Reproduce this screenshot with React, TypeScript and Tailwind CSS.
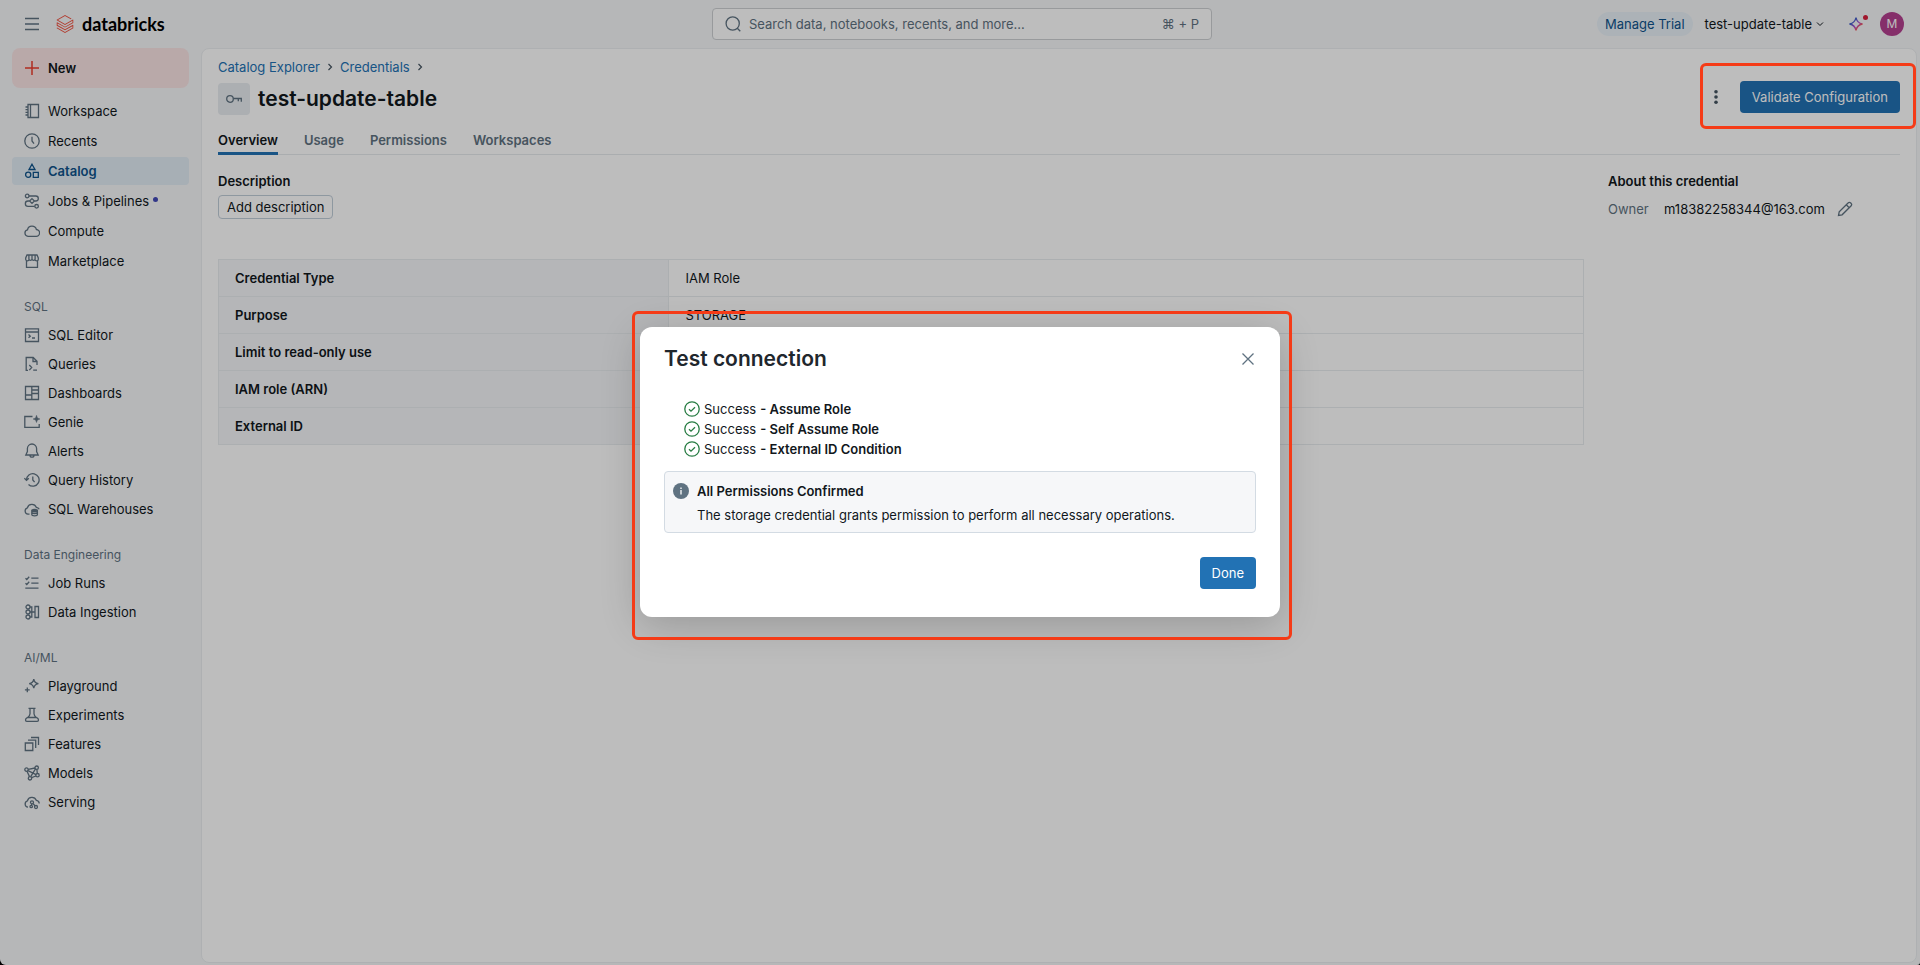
import React from 'react';
import type { ReactNode } from 'react';

const NAV_MAIN = [
  { label: 'Workspace', icon: 'workspace' },
  { label: 'Recents', icon: 'recents' },
  { label: 'Catalog', icon: 'catalog', active: true },
  { label: 'Jobs & Pipelines', icon: 'jobs', dot: true },
  { label: 'Compute', icon: 'compute' },
  { label: 'Marketplace', icon: 'marketplace' },
];

const NAV_SECTIONS = [
  {
    title: 'SQL',
    items: [
      { label: 'SQL Editor', icon: 'editor' },
      { label: 'Queries', icon: 'queries' },
      { label: 'Dashboards', icon: 'dashboards' },
      { label: 'Genie', icon: 'genie' },
      { label: 'Alerts', icon: 'alerts' },
      { label: 'Query History', icon: 'history' },
      { label: 'SQL Warehouses', icon: 'warehouses' },
    ],
  },
  {
    title: 'Data Engineering',
    items: [
      { label: 'Job Runs', icon: 'runs' },
      { label: 'Data Ingestion', icon: 'ingestion' },
    ],
  },
  {
    title: 'AI/ML',
    items: [
      { label: 'Playground', icon: 'playground' },
      { label: 'Experiments', icon: 'experiments' },
      { label: 'Features', icon: 'features' },
      { label: 'Models', icon: 'models' },
      { label: 'Serving', icon: 'serving' },
    ],
  },
];

const TABS = ['Overview', 'Usage', 'Permissions', 'Workspaces'];

const DETAILS = [
  { name: 'Credential Type', value: 'IAM Role' },
  { name: 'Purpose', value: 'STORAGE' },
  { name: 'Limit to read-only use', value: '' },
  { name: 'IAM role (ARN)', value: '' },
  { name: 'External ID', value: '' },
];

const CHECKS = ['Assume Role', 'Self Assume Role', 'External ID Condition'];

const ICONS: Record<string, ReactNode> = {
  workspace: <path d="M4 1.5h10.500v13H4zM6.500 1.500v13M1.500 4H4M1.500 6.700H4M1.500 9.300H4M1.500 12H4" />,
  recents: (
    <>
      <circle cx="8" cy="8" r="7.2" />
      <path d="M8 3.800V8l2 2.600" />
    </>
  ),
  catalog: (
    <>
      <path d="M8 1.200 11 6.500H5zM9.300 9.300h5v5h-5z" />
      <circle cx="4.2" cy="11.8" r="2.6" />
    </>
  ),
  jobs: (
    <>
      <circle cx="3.2" cy="3" r="1.8" />
      <circle cx="12.6" cy="13.3" r="1.8" />
      <path d="M5 3h6.800a2.400 2.400 0 0 1 0 5h-1.400M5.600 8H4a2.600 2.600 0 0 0 0 5.300h6.700M8 5.600 10.400 8 8 10.400 5.600 8z" />
    </>
  ),
  compute: <path d="M4 13.300a3.300 3.300 0 0 1-.5-6.500 4.600 4.600 0 0 1 8.900-.3A3.400 3.400 0 0 1 12 13.300z" />,
  marketplace: (
    <path d="M2.500 8v6.300h11V8M3 2h10l1.300 3v1.200a1.600 1.600 0 0 1-3.200 0 1.600 1.600 0 0 1-3.100 0 1.600 1.600 0 0 1-3.100 0 1.600 1.600 0 0 1-3.200 0V5zM4.900 6V2M8 6V2M11.100 6V2" />
  ),
  editor: <path d="M1.500 1.800h13v12.700h-13zM1.500 5h13M4.500 7.500l1.800 1.700-1.800 1.600M8 11h3" />,
  queries: <path d="M4 14.300H2.200V1.500h7L13 5.300V9M9 1.700v3.800h4M5.300 9l2.400 2.500-2.400 2.600M9.200 14.200H13" />,
  dashboards: <path d="M1.500 1.500h13v13h-13zM7.800 1.500v13M7.800 8.500h6.700M1.500 10h6.300M7.800 5h6.700" />,
  genie: (
    <>
      <path d="M8.500 2.500H.8v10.800h14.400V10" />
      <path d="m12.500 1.200 1 2.800 2.500 1-2.500 1-1 2.600-1-2.600-2.500-1 2.500-1z" fill="currentColor" strokeWidth="0.4" />
    </>
  ),
  alerts: <path d="M8 1a4.600 4.600 0 0 0-4.600 4.600v2.900L1.800 12h12.400l-1.600-3.500V5.600A4.600 4.600 0 0 0 8 1zM6 12.200a2 2 0 0 0 4 0" />,
  history: <path d="M2.500 8a6.300 6.300 0 1 1 2 4.500M.4 6.200l2.100 2.200 2.300-2.200M8.800 4.500V8l1.800 2.200" />,
  warehouses: (
    <>
      <path d="M5.500 13.200H4a3.300 3.300 0 0 1-.6-6.400 4.700 4.700 0 0 1 8.900-.5c1.400.2 2.400.9 2.900 2" />
      <path d="M7.800 9.600h5.600v4a2.800 1.200 0 0 1-5.600 0zM7.800 9.600a2.800 1.200 0 0 1 5.600 0 2.800 1.200 0 0 1-5.600 0M7.800 11.800c1.300 1 4.300 1 5.600 0" />
    </>
  ),
  runs: <path d="M1.500 3.200 2.800 4.500l2.400-2.700M1.500 8.200l1.300 1.300 2.400-2.700M7.300 3.200h7.200M7.300 8.200h7.200M1.300 13.200h13.200" />,
  ingestion: (
    <>
      <circle cx="4" cy="3" r="2" />
      <circle cx="4" cy="8" r="2" />
      <circle cx="4" cy="13" r="2" />
      <path d="M6 3h1.800v10H6M6 8h4.500M11 2.500h3.500v11H11z" />
    </>
  ),
  playground: (
    <path d="M9.800 1.200c.4 2.800 1.600 4 4.600 4.500-3 .5-4.200 1.700-4.600 4.500-.5-2.800-1.700-4-4.600-4.500 2.900-.5 4.100-1.700 4.600-4.500zM3.300 9.500v4.800M.9 11.900h4.800" />
  ),
  experiments: (
    <path d="M4.500 1.300h7M6 1.500v5.300c0 2-1 3-2.700 3.900-1.200.6-1.800 1.200-1.800 2.300 0 .8.500 1.300 1.300 1.300h10.400c.8 0 1.300-.5 1.300-1.300 0-1.100-.6-1.700-1.800-2.300C11 9.800 10 8.800 10 6.800V1.500M3.500 10.500h9" />
  ),
  features: <path d="M1.300 7h7.500v7.500H1.300zM4 4.200h7.700V12M7 1.500h7.500V9" />,
  models: (
    <>
      <circle cx="2.5" cy="4.6" r="1.7" />
      <circle cx="12.7" cy="2.7" r="1.7" />
      <circle cx="13.5" cy="10.2" r="1.7" />
      <circle cx="6" cy="13.3" r="1.7" />
      <path d="m4.200 4.300 6.800-1.300M4 5.600l8 4M3 6.300l2.500 5.300M12.900 4.400l.4 4.100M7.600 12.700l4.300-1.700M11.500 3.900 6.700 11.700" />
    </>
  ),
  serving: (
    <>
      <path d="M4 13.200a3.300 3.300 0 0 1-.6-6.400 4.700 4.700 0 0 1 8.900-.5c1.600.2 2.900 1.300 2.900 3.200" />
      <circle cx="8" cy="8.3" r="1.5" />
      <circle cx="7.2" cy="12.5" r="1.2" />
      <circle cx="12" cy="13" r="1.5" />
      <path d="m9 9.500 2 2.400M7.800 9.800l-.4 1.500" />
    </>
  ),
};

function NavIcon({ name, className = '' }: { name: string; className?: string }) {
  return (
    <svg
      viewBox="0 0 16 16"
      width={16}
      height={16}
      fill="none"
      stroke="currentColor"
      strokeWidth="1.3"
      className={`shrink-0 ${className}`}
      aria-hidden="true"
    >
      {ICONS[name]}
    </svg>
  );
}

function Logo() {
  return (
    <a href="#" className="flex items-center gap-2 text-black">
      <svg viewBox="0 0 24 24" width={18} height={18} fill="#f0503f" aria-hidden="true">
        <path d="M.95 14.184L12 20.403l9.919-5.550v2.210L12 22.662l-10.484-5.960-.565.308v.770L12 24l11.050-6.218v-4.317l-.515-.309L12 19.118l-9.867-5.653v-2.210L12 16.805l11.050-6.218V6.320l-.515-.308L12 11.974 2.647 6.681 12 1.388l7.760 4.368.668-.411v-.566L12 0 .95 6.270v.720L12 13.207l9.919-5.550v2.260L12 15.520 1.516 9.560l-.565.308Z" />
      </svg>
      <span className="font-['Lato','Inter',sans-serif] text-[18px] leading-6 font-bold">databricks</span>
    </a>
  );
}

function TopBar() {
  return (
    <header className="flex h-12 shrink-0 items-center pr-4 pl-5">
      <div className="flex flex-1 items-center gap-3">
        <button type="button" aria-label="Menu" className="p-1 text-[#5f7281]">
          <svg viewBox="0 0 16 16" width={16} height={16} stroke="currentColor" strokeWidth="1.5" aria-hidden="true">
            <path d="M1 2.500h14M1 8h14M1 13.500h14" />
          </svg>
        </button>
        <Logo />
      </div>
      <label className="flex h-8 w-[500px] items-center gap-2 rounded border border-[#cdd0d3] bg-white px-3 text-[#5f7281]">
        <svg viewBox="0 0 16 16" width={16} height={16} fill="none" stroke="currentColor" strokeWidth="1.3" aria-hidden="true">
          <circle cx="7.7" cy="7.5" r="6.6" />
          <path d="m12.300 12.300 3 3" />
        </svg>
        <input
          type="text"
          aria-label="Search"
          placeholder="Search data, notebooks, recents, and more..."
          className="min-w-0 flex-1 bg-transparent outline-none placeholder:text-[#5f7281]"
        />
        <span>⌘ + P</span>
      </label>
      <div className="flex flex-1 items-center justify-end">
        <button type="button" className="h-6 rounded-full bg-[#e8f1f7] px-2 text-[#0e538b]">
          Manage Trial
        </button>
        <button type="button" className="ml-3 flex items-center gap-1 text-[#11171c]">
          test-update-table
          <svg viewBox="0 0 8 8" width={8} height={8} fill="none" stroke="currentColor" aria-hidden="true">
            <path d="m1 2.500 3 3 3-3" />
          </svg>
        </button>
        <button type="button" aria-label="Assistant" className="relative ml-6">
          <svg viewBox="0 0 16 16" width={16} height={16} fill="none" stroke="url(#spark)" strokeWidth="1.4" aria-hidden="true">
            <defs>
              <linearGradient id="spark" x1="0" y1="0" x2="1" y2="1">
                <stop offset="0.300" stopColor="#4462c9" />
                <stop offset="0.550" stopColor="#b04bd0" />
                <stop offset="0.800" stopColor="#ff5f46" />
              </linearGradient>
            </defs>
            <path d="M8 1.500c.7 3.900 2.600 5.800 6.500 6.500-3.900.7-5.800 2.600-6.500 6.500C7.300 10.600 5.400 8.700 1.500 8 5.400 7.300 7.300 5.400 8 1.500z" />
          </svg>
          <span className="absolute -top-px -right-1 size-[5px] rounded-full bg-[#d81f3c]" />
        </button>
        <span className="ml-4 flex size-6 items-center justify-center rounded-full bg-[#b4408f] text-xs text-white">M</span>
      </div>
    </header>
  );
}

type NavItemProps = { label: string; icon: string; active?: boolean; dot?: boolean };

function NavItem({ label, icon, active, dot }: NavItemProps) {
  return (
    <a
      href="#"
      className={`flex h-7 items-center gap-2 rounded px-3 ${
        active ? 'bg-[#e2ecf4] font-semibold text-[#0e538b]' : 'text-[#11171c]'
      }`}
    >
      <NavIcon name={icon} className={active ? '' : 'text-[#5f7281]'} />
      <span>{label}</span>
      {dot && <span className="-mt-1 -ml-1 size-[5px] rounded-full bg-[#434ab8]" />}
    </a>
  );
}

function Sidebar() {
  return (
    <nav className="w-[201px] shrink-0 px-3">
      <button
        type="button"
        className="mb-[9px] flex h-10 w-full items-center gap-2 rounded-lg bg-[#fae5e5] px-3 font-semibold text-[#11171c]"
      >
        <svg viewBox="0 0 16 16" width={16} height={16} stroke="#ee3d2c" strokeWidth="1.5" aria-hidden="true">
          <path d="M8 1v14M1 8h14" />
        </svg>
        New
      </button>
      <div className="flex flex-col gap-[2px]">
        {NAV_MAIN.map((item) => (
          <NavItem key={item.label} {...item} />
        ))}
      </div>
      {NAV_SECTIONS.map((section) => (
        <div key={section.title} className="mt-6">
          <h2 className="mb-[6px] px-3 text-xs leading-4 text-[#5f7281]">{section.title}</h2>
          <div className="flex flex-col gap-px">
            {section.items.map((item) => (
              <NavItem key={item.label} {...item} />
            ))}
          </div>
        </div>
      ))}
    </nav>
  );
}

function Chevron() {
  return (
    <svg viewBox="0 0 8 8" width={8} height={8} fill="none" stroke="#44535f" strokeWidth="1.2" className="mx-[6px]" aria-hidden="true">
      <path d="m2.500 1 3 3-3 3" />
    </svg>
  );
}

function Crumbs() {
  return (
    <div className="flex h-5 items-center text-[#2272b4]">
      <a href="#">Catalog Explorer</a>
      <Chevron />
      <a href="#">Credentials</a>
      <Chevron />
    </div>
  );
}

function CredentialPage() {
  return (
    <main className="mr-[3px] mb-[2px] min-w-0 flex-1 rounded-lg border border-[#ebeef0] bg-white px-4 pt-2">
      <div className="flex items-end justify-between">
        <div>
          <Crumbs />
          <div className="mt-[6px] flex items-center gap-2">
            <span className="flex size-8 items-center justify-center rounded bg-[#e8ecf0] text-[#5f7281]">
              <svg viewBox="0 0 16 16" width={16} height={16} fill="none" stroke="currentColor" strokeWidth="1.3" aria-hidden="true">
                <circle cx="4" cy="8" r="3.3" />
                <path d="M7.300 7.500h8v3.200M12.300 7.500v2.700" />
              </svg>
            </span>
            <h1 className="text-[21px] leading-7 font-semibold">test-update-table</h1>
          </div>
        </div>
        <div className="relative mb-[2px] flex items-center">
          <button type="button" aria-label="More actions" className="flex size-8 items-center justify-center text-[#445461]">
            <svg viewBox="0 0 16 16" width={16} height={16} fill="currentColor" aria-hidden="true">
              <circle cx="8" cy="2.7" r="1.8" />
              <circle cx="8" cy="8" r="1.8" />
              <circle cx="8" cy="13.3" r="1.8" />
            </svg>
          </button>
          <button type="button" className="ml-2 h-8 rounded bg-[#2272b4] px-3 text-white">
            Validate Configuration
          </button>
          <div className="pointer-events-none absolute -top-[18px] -right-4 -bottom-4 left-0 z-20 rounded-md border-3 border-[#f53b17]" />
        </div>
      </div>

      <div role="tablist" className="mt-3 flex gap-[26px] border-b border-[#e6eaed]">
        {TABS.map((tab, index) => (
          <button
            key={tab}
            type="button"
            role="tab"
            aria-selected={index === 0}
            className={`-mb-px h-7 border-b-3 font-semibold ${
              index === 0 ? 'border-[#2272b4] text-[#11171c]' : 'border-transparent text-[#5f7281]'
            }`}
          >
            {tab}
          </button>
        ))}
      </div>

      <div className="flex gap-6 pt-4">
        <section className="min-w-0 flex-1">
          <h2 className="font-semibold">Description</h2>
          <button type="button" className="mt-1 h-6 rounded border border-[#c0cdd8] px-2">
            Add description
          </button>
          <table className="mt-10 w-full table-fixed border-collapse border border-[#e8ecef] text-left">
            <tbody>
              {DETAILS.map((row) => (
                <tr key={row.name} className="h-[37px] border-b border-[#e8ecef]">
                  <th scope="row" className="w-[33%] border-r border-[#e8ecef] bg-[#f4f6f8] px-4 font-semibold">
                    {row.name}
                  </th>
                  <td className="px-4">{row.value}</td>
                </tr>
              ))}
            </tbody>
          </table>
        </section>
        <aside className="w-[292px] shrink-0">
          <h2 className="font-semibold">About this credential</h2>
          <div className="mt-2 flex items-center">
            <span className="w-14 text-[#5f7281]">Owner</span>
            <span>m18382258344@163.com</span>
            <button type="button" aria-label="Edit owner" className="ml-3 text-[#5f7281]">
              <svg viewBox="0 0 16 16" width={16} height={16} fill="none" stroke="currentColor" strokeWidth="1.3" aria-hidden="true">
                <path d="m1.500 14.500.7-3.600L11.300 1.800a1.500 1.500 0 0 1 2.200 0l.7.700a1.500 1.500 0 0 1 0 2.200l-9.100 9.100zM9.300 3.800l2.900 2.900" />
              </svg>
            </button>
          </div>
        </aside>
      </div>
    </main>
  );
}

function TestConnectionDialog() {
  return (
    <div
      role="dialog"
      aria-modal="true"
      aria-labelledby="dialog-title"
      className="relative w-[640px] rounded-xl bg-white px-6 pt-4 pb-7 shadow-[0_8px_40px_rgba(0,0,0,0.2)]"
    >
      <div className="flex h-8 items-center justify-between">
        <h2 id="dialog-title" className="text-[21px] leading-7 font-semibold text-[#1f272d]">
          Test connection
        </h2>
        <button type="button" aria-label="Close" className="flex size-4 items-center justify-center text-[#5f7281]">
          <svg viewBox="0 0 12 12" width={12} height={12} stroke="currentColor" strokeWidth="1.3" aria-hidden="true">
            <path d="m.5.5 11 11M11.500.5l-11 11" />
          </svg>
        </button>
      </div>
      <ul className="mt-6 pl-5">
        {CHECKS.map((check) => (
          <li key={check} className="flex h-5 items-center">
            <svg viewBox="0 0 16 16" width={16} height={16} fill="none" stroke="#277c43" strokeWidth="1.3" aria-hidden="true">
              <circle cx="8" cy="8" r="7.2" />
              <path d="m5 8.200 2 2 4-4" />
            </svg>
            <span className="ml-1">Success</span>
            <span className="ml-1 font-semibold">- {check}</span>
          </li>
        ))}
      </ul>
      <div className="mt-3 flex gap-2 rounded border border-[#d3dbe3] bg-[#f6f7f9] px-2 pt-[9px] pb-[7px]">
        <svg viewBox="0 0 16 16" width={16} height={16} className="mt-[2px] shrink-0" aria-hidden="true">
          <circle cx="8" cy="8" r="8" fill="#5f7281" />
          <path d="M8 7v4.500M8 4.500V6" stroke="#fff" strokeWidth="1.3" />
        </svg>
        <div>
          <p className="font-semibold">All Permissions Confirmed</p>
          <p className="mt-1">The storage credential grants permission to perform all necessary operations.</p>
        </div>
      </div>
      <div className="mt-6 flex justify-end">
        <button type="button" className="h-8 rounded bg-[#2272b4] px-3 text-white">
          Done
        </button>
      </div>
      <div className="pointer-events-none absolute -top-4 -right-3 -bottom-[23px] -left-2 rounded-md border-3 border-[#f53b17]" />
    </div>
  );
}

export default function App() {
  return (
    <div className="bg-black font-['Inter','Liberation_Sans',sans-serif] text-[13px] leading-5 text-[#11171c]">
      <div className="relative flex min-h-screen flex-col overflow-hidden rounded-br-[3px] rounded-bl-md bg-[#f6f7f9]">
        <TopBar />
        <div className="flex flex-1">
          <Sidebar />
          <CredentialPage />
        </div>

        <div className="absolute inset-0 z-10 flex items-start justify-center bg-black/26 pt-[327px]">
          <TestConnectionDialog />
        </div>
      </div>
    </div>
  );
}
